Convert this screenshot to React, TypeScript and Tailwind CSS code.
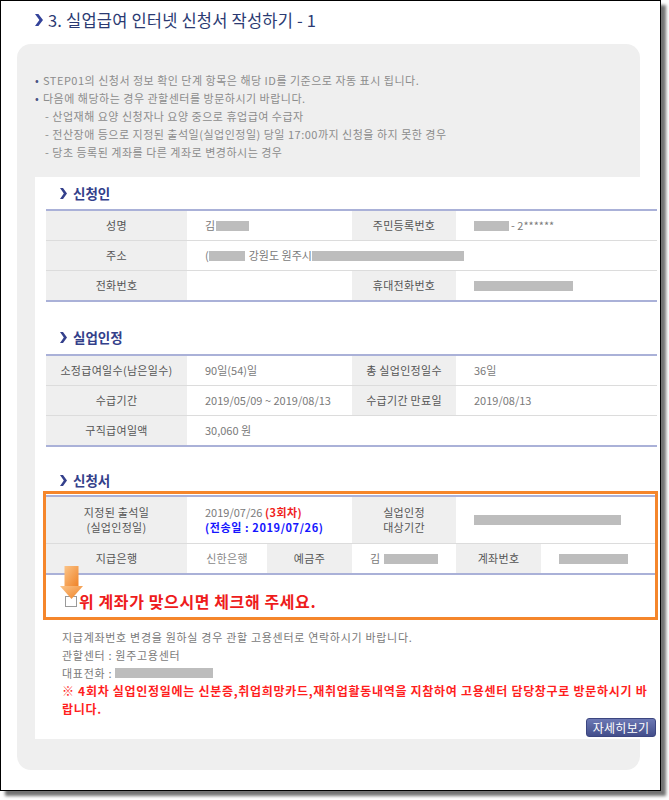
import React from "react";

const Mask = ({ w, className = "" }: { w: number; className?: string }) => (
  <span className={"inline-block h-[10px] bg-[#bdbdbd] " + className} style={{ width: w }} />
);

const Chevron = ({ big = false }: { big?: boolean }) =>
  big ? (
    <svg width="8" height="12" viewBox="0 0 8 12" className="shrink-0">
      <polygon points="0,0 3.4,0 8,6 3.4,12 0,12 4.4,6" fill="#34439a" />
    </svg>
  ) : (
    <svg width="7" height="11" viewBox="0 0 7 11" className="shrink-0">
      <polygon points="0,0 3,0 7,5.5 3,11 0,11 3.8,5.5" fill="#34408c" />
    </svg>
  );

const Heading = ({ children, className = "" }: { children: React.ReactNode; className?: string }) => (
  <div className={"flex h-[20px] items-center gap-[6px] pl-[14px] " + className}>
    <Chevron />
    <span className="text-[13.5px] font-bold leading-[20px] text-[#33408a]">{children}</span>
  </div>
);

const L = "flex items-center justify-center bg-[#efefef] text-[11px] leading-[15px] tracking-[0.3px] text-[#555] text-center";
const V = "flex items-center pl-[18px] text-[11px] leading-[15px] text-[#7a7a7a] whitespace-nowrap";
const ROW = "grid grid-cols-[141px_165px_104px_1fr] h-[30px] border-b border-[#dcdcdc]";
const ROWLAST = "grid grid-cols-[141px_165px_104px_1fr] h-[29px]";

export default function App() {
  return (
    <div className="min-h-[800px] bg-white font-['Noto_Sans_CJK_KR','Noto_Sans',sans-serif]">
      <div className="relative h-[791px] w-[661px] overflow-hidden border border-black bg-white shadow-[5px_5px_3px_rgba(0,0,0,0.55)]">
        {/* Title */}
        <div className="flex h-[24px] items-center gap-[5px] pl-[34px] mt-[7px]">
          <Chevron big />
          <span className="text-[16.5px] leading-[24px] tracking-[0.2px] text-[#2b3a72]">3. 실업급여 인터넷 신청서 작성하기 - 1</span>
        </div>

        {/* Gray panel */}
        <div className="ml-[16px] mt-[12px] h-[726px] w-[623px] rounded-[14px] bg-[#efefef] pl-[18px] pt-[27px]">
          <div className="text-[11px] leading-[18px] tracking-[0.5px] text-[#8c8c8c]">
            <div className="flex">
              <span className="w-[8px] text-[#4a5585]">•</span>
              <span>STEP01의 신청서 정보 확인 단계 항목은 해당 ID를 기준으로 자동 표시 됩니다.</span>
            </div>
            <div className="flex">
              <span className="w-[8px] text-[#4a5585]">•</span>
              <span>다음에 해당하는 경우 관할센터를 방문하시기 바랍니다.</span>
            </div>
            <div className="pl-[10px]">- 산업재해 요양 신청자나 요양 중으로 휴업급여 수급자</div>
            <div className="pl-[10px]">- 전산장애 등으로 지정된 출석일(실업인정일) 당일 17:00까지 신청을 하지 못한 경우</div>
            <div className="pl-[10px]">- 당초 등록된 계좌를 다른 계좌로 변경하시는 경우</div>
          </div>

          {/* White panel */}
          <div className="mt-[16px] flex w-[625px] flex-col bg-white pb-[2px] pl-[11px] pr-[3px] pt-[6px]">
            <Heading>신청인</Heading>
            <div className="mt-[6px] border-y-2 border-[#aab1d8]">
              <div className={ROW}>
                <div className={L}>성명</div>
                <div className={V}>김<Mask w={33} className="ml-[1px]" /></div>
                <div className={L}>주민등록번호</div>
                <div className={V}><Mask w={35} /><span className="ml-[2px]">- 2******</span></div>
              </div>
              <div className="grid grid-cols-[141px_1fr] h-[30px] border-b border-[#dcdcdc]">
                <div className={L}>주소</div>
                <div className={V}>(<Mask w={36} /><span className="ml-[4px]">강원도 원주시</span><Mask w={152} /></div>
              </div>
              <div className={ROWLAST}>
                <div className={L}>전화번호</div>
                <div className={V}></div>
                <div className={L}>휴대전화번호</div>
                <div className={V + " pl-[10px]"}><Mask w={99} /></div>
              </div>
            </div>

            <Heading className="mt-[25px]">실업인정</Heading>
            <div className="mt-[7px] border-y-2 border-[#aab1d8]">
              <div className={ROW}>
                <div className={L}>소정급여일수(남은일수)</div>
                <div className={V}>90일(54)일</div>
                <div className={L}>총 실업인정일수</div>
                <div className={V}>36일</div>
              </div>
              <div className={ROW}>
                <div className={L}>수급기간</div>
                <div className={V}>2019/05/09 ~ 2019/08/13</div>
                <div className={L}>수급기간 만료일</div>
                <div className={V}>2019/08/13</div>
              </div>
              <div className="grid grid-cols-[141px_1fr] h-[29px]">
                <div className={L}>구직급여일액</div>
                <div className={V}>30,060 원</div>
              </div>
            </div>

            <Heading className="mt-[23px]">신청서</Heading>
            <div className="relative ml-[-3px] mt-[1px] w-[615px] border-[3px] border-[#f5862b] pt-[1px]">
              <div className="border-y-2 border-[#aab1d8]">
                <div className="grid grid-cols-[141px_80px_85px_104px_85px_1fr] h-[47px] border-b border-[#dcdcdc]">
                  <div className={L}>
                    <div>
                      지정된 출석일
                      <br />
                      (실업인정일)
                    </div>
                  </div>
                  <div className="col-span-2 flex flex-col justify-center pl-[18px] text-[11px] leading-[15px] whitespace-nowrap">
                    <div>
                      <span className="text-[#7a7a7a]">2019/07/26 </span>
                      <span className="font-bold tracking-[0.4px] text-[#f01e1e]">(3회차)</span>
                    </div>
                    <div className="font-bold tracking-[0.6px] text-[#1515ff]">(전송일 : 2019/07/26)</div>
                  </div>
                  <div className={L}>
                    <div>
                      실업인정
                      <br />
                      대상기간
                    </div>
                  </div>
                  <div className={"col-span-2 " + V + " pl-[5px]"}><Mask w={147} /></div>
                </div>
                <div className="grid grid-cols-[141px_80px_85px_104px_85px_1fr] h-[29px]">
                  <div className={L}>지급은행</div>
                  <div className={L + " bg-white text-[#888]"}>신한은행</div>
                  <div className={L}>예금주</div>
                  <div className={V}>김<Mask w={54} className="ml-[4px]" /></div>
                  <div className={L}>계좌번호</div>
                  <div className={V + " pl-[14px]"}><Mask w={69} /></div>
                </div>
              </div>
              <div className="flex h-[20px] items-center gap-[2px] pl-[19px] mt-[16px] mb-[6px]">
                <span className="inline-block h-[11px] w-[12px] border border-[#9a9a9a] bg-white" />
                <span className="text-[16px] font-bold leading-[20px] tracking-[0.6px] text-[#ee1c1c]">
                  위 계좌가 맞으시면 체크해 주세요.
                </span>
              </div>
              <svg width="24" height="33" viewBox="0 0 24 33" className="absolute left-[14px] top-[72px] z-10">
                <defs>
                  <linearGradient id="arr" x1="0" y1="0" x2="1" y2="1">
                    <stop offset="0" stopColor="#fbc488" />
                    <stop offset="1" stopColor="#ef8226" />
                  </linearGradient>
                </defs>
                <rect x="4.5" y="0" width="14" height="21" fill="url(#arr)" />
                <polygon points="0,20 23,20 11.5,33" fill="url(#arr)" />
              </svg>
            </div>

            <div className="mt-[8px] pl-[16px] text-[11px] leading-[18px] tracking-[0.7px] text-[#7a7a7a]">
              <div>지급계좌번호 변경을 원하실 경우 관할 고용센터로 연락하시기 바랍니다.</div>
              <div>관할센터 : 원주고용센터</div>
              <div className="flex items-center">
                대표전화 :<Mask w={98} className="ml-[3px]" />
              </div>
              <div className="text-[12px] font-bold leading-[18px] tracking-[0.7px] text-[#ff1e1e] whitespace-nowrap">
                ※ 4회차 실업인정일에는 신분증,취업희망카드,재취업활동내역을 지참하여 고용센터 담당창구로 방문하시기 바
                <br />
                랍니다.
              </div>
            </div>
            <div className="flex justify-end pr-[1px]">
              <button className="h-[19px] w-[70px] rounded-[3px] border border-[#3c4680] bg-gradient-to-b from-[#6c78b4] to-[#434e8b] text-[12px] leading-[17px] tracking-[0.3px] text-white">
                자세히보기
              </button>
            </div>
          </div>
        </div>
      </div>
    </div>
  );
}
